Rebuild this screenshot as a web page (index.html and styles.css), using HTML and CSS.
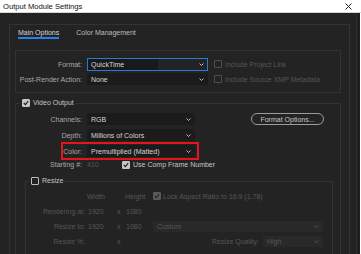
FILE: index.html
```html
<!DOCTYPE html>
<html lang="en">
<head>
    <meta charset="UTF-8">
    <title>Output Module Settings</title>
    <link rel="stylesheet" href="styles.css">
</head>
<body>

<div class="titlebar">
    <span class="title">Output Module Settings</span>
    <svg class="close" width="7" height="7" viewBox="0 0 7 7"><path d="M0.5 0.5 L6.5 6.5 M6.5 0.5 L0.5 6.5" stroke="#222" stroke-width="1" fill="none"/></svg>
</div>

<div class="window">
    <div class="main">
        <div class="panel">
            <!-- Tabs -->
            <div class="tabs">
                <span class="tab active">Main Options</span>
                <span class="tab">Color Management</span>
            </div>

            <!-- Format -->
            <div class="group format-group">
                <div class="row">
                    <span class="lbl">Format:</span>
                    <div class="select wide focused"><span class="val">QuickTime</span><svg class="chev" width="5" height="3" viewBox="0 0 5 3"><path d="M0.5 0.5 L2.5 2.5 L4.5 0.5" stroke="#bdbdbd" fill="none"/></svg></div>
                    <span class="check"></span><span class="dim">Include Project Link</span>
                </div>
                <div class="row">
                    <span class="lbl">Post-Render Action:</span>
                    <div class="select wide"><span class="val">None</span><svg class="chev" width="5" height="3" viewBox="0 0 5 3"><path d="M0.5 0.5 L2.5 2.5 L4.5 0.5" stroke="#bdbdbd" fill="none"/></svg></div>
                    <span class="check"></span><span class="dim">Include Source XMP Metadata</span>
                </div>
            </div>

            <!-- Video Output -->
            <fieldset class="group video">
                <legend><span class="check on"><svg width="6" height="6" viewBox="0 0 6 6"><path d="M0.8 3 L2.4 4.6 L5.2 1.2" stroke="#222" stroke-width="1.2" fill="none"/></svg></span>Video Output</legend>
                <div class="video-body">
                    <div class="fields">
                        <div class="row">
                            <span class="lbl">Channels:</span>
                            <div class="select"><span class="val">RGB</span><svg class="chev" width="5" height="3" viewBox="0 0 5 3"><path d="M0.5 0.5 L2.5 2.5 L4.5 0.5" stroke="#bdbdbd" fill="none"/></svg></div>
                        </div>
                        <div class="row">
                            <span class="lbl">Depth:</span>
                            <div class="select"><span class="val">Millions of Colors</span><svg class="chev" width="5" height="3" viewBox="0 0 5 3"><path d="M0.5 0.5 L2.5 2.5 L4.5 0.5" stroke="#bdbdbd" fill="none"/></svg></div>
                        </div>
                        <div class="row marked">
                            <span class="lbl">Color:</span>
                            <div class="select"><span class="val">Premultiplied (Matted)</span><svg class="chev" width="5" height="3" viewBox="0 0 5 3"><path d="M0.5 0.5 L2.5 2.5 L4.5 0.5" stroke="#bdbdbd" fill="none"/></svg></div>
                        </div>
                    </div>
                    <button class="pill">Format Options...</button>
                </div>

                <div class="row start-row">
                    <span class="lbl">Starting #:</span>
                    <span class="start-val">410</span>
                    <span class="check on"><svg width="6" height="6" viewBox="0 0 6 6"><path d="M0.8 3 L2.4 4.6 L5.2 1.2" stroke="#222" stroke-width="1.2" fill="none"/></svg></span><span>Use Comp Frame Number</span>
                </div>

                <!-- Resize -->
                <fieldset class="group resize">
                    <legend><span class="check light"></span>Resize</legend>
                    <div class="rz-head">
                        <span class="rz-w">Width</span>
                        <span class="rz-h">Height</span>
                        <span class="check on dimmed"><svg width="6" height="6" viewBox="0 0 6 6"><path d="M0.8 3 L2.4 4.6 L5.2 1.2" stroke="#2a2a2a" stroke-width="1.2" fill="none"/></svg></span><span>Lock Aspect Ratio to 16:9 (1.78)</span>
                    </div>
                    <div class="rz-row">
                        <span class="rz-lbl">Rendering at:</span>
                        <span class="rz-a">1920</span><span class="rz-x">x</span><span class="rz-b">1080</span>
                    </div>
                    <div class="rz-row">
                        <span class="rz-lbl">Resize to:</span>
                        <span class="rz-a">1920</span><span class="rz-x">x</span><span class="rz-b">1080</span>
                        <div class="select off grow"><span class="val">Custom</span><svg class="chev" width="5" height="3" viewBox="0 0 5 3"><path d="M0.5 0.5 L2.5 2.5 L4.5 0.5" stroke="#555" fill="none"/></svg></div>
                    </div>
                    <div class="rz-row">
                        <span class="rz-lbl">Resize %:</span>
                        <span class="rz-a"></span><span class="rz-x">x</span><span class="rz-b"></span>
                        <span class="rz-q">Resize Quality:</span>
                        <div class="select off small"><span class="val">High</span><svg class="chev" width="5" height="3" viewBox="0 0 5 3"><path d="M0.5 0.5 L2.5 2.5 L4.5 0.5" stroke="#555" fill="none"/></svg></div>
                    </div>
                </fieldset>
            </fieldset>
        </div>
    </div>
    <div class="side"></div>
</div>

</body>
</html>
```

FILE: styles.css
```css
/* Global */
* {
    box-sizing: border-box;
}

body {
    margin: 0;
    width: 361px;
    height: 254px;
    overflow: hidden;
    background-color: #ffffff;
    font-family: "Liberation Sans", Arial, sans-serif;
    font-size: 7px;
    color: #b9b9b9;
}

/* Title bar */
.titlebar {
    height: 13px;
    background-color: #ffffff;
    border-bottom: 1px solid #d6d6d6;
    display: flex;
    align-items: center;
    justify-content: space-between;
    padding: 0 9px 0 3px;
    color: #111;
    font-size: 7.6px;
}

.window {
    display: flex;
    width: 360px;
    height: 241px;
    background-color: #232323;
}

.main {
    flex: 1;
    padding: 11px 0 0 9px;
}

.side {
    width: 4px;
    border-left: 1px solid #2e2e2e;
    background-color: #1f1f1f;
}

.panel {
    width: 341px;
    height: 260px;
    border: 1px solid #323232;
    padding: 3px 0 0 8px;
}

/* Tabs */
.tabs {
    display: flex;
    gap: 17px;
    line-height: 9px;
}

.tab {
    color: #bdbdbd;
    border-bottom: 2px solid transparent;
}

.tab.active {
    color: #d6d6d6;
    border-bottom-color: #2680eb;
}

/* Groups */
.group {
    border: 1px solid #323232;
    margin: 0;
    min-width: 0;
}

.format-group {
    width: 326px;
    margin: 11px 0 0 -3px;
    padding: 7px 0 7px 0;
    display: flex;
    flex-direction: column;
    gap: 3px;
}

.row {
    display: flex;
    align-items: center;
    height: 12px;
}

.lbl {
    width: 66px;
    margin-right: 5px;
    text-align: right;
    color: #a9a9a9;
}

.select {
    height: 12px;
    width: 108px;
    background-color: #1b1b1b;
    border: 1px solid #1b1b1b;
    display: flex;
    align-items: center;
    justify-content: space-between;
    padding: 0 3px 0 3px;
    color: #d4d4d4;
}

.select.wide {
    width: 121px;
}

.select.focused {
    height: 13px;
    border-color: #2a79d8;
    background: linear-gradient(to right, #191919 0, #191919 70px, #232323 70px);
}

.chev {
    display: block;
}

.check {
    display: inline-flex;
    align-items: center;
    justify-content: center;
    width: 8px;
    height: 8px;
    border: 1px solid #4e4e4e;
    border-radius: 1px;
    margin: 0 3px 0 6px;
    flex: none;
}

.check.on {
    background-color: #c6c6c6;
    border-color: #c6c6c6;
}

.check.light {
    border-color: #bdbdbd;
}

.check.dimmed {
    background-color: #5a5a5a;
    border-color: #5a5a5a;
}

.check svg {
    display: block;
}

.dim {
    color: #565656;
}

/* Video output */
.video {
    width: 326px;
    margin: 6px 0 0 -3px;
    padding: 0 0 20px 0;
}

legend {
    display: flex;
    align-items: center;
    height: 8px;
    line-height: 8px;
    padding: 0 2px;
    margin-left: 4px;
    color: #c6c6c6;
}

legend .check {
    margin: 0 3px 0 0;
}

.video-body {
    display: flex;
    align-items: flex-start;
    padding-top: 6px;
}

.fields {
    display: flex;
    flex-direction: column;
    gap: 4px;
}

.marked {
    position: relative;
}

/* red annotation box */
.marked::after {
    content: "";
    position: absolute;
    left: 45px;
    right: -4px;
    top: -3px;
    bottom: -3px;
    border: 2px solid #e3161d;
}

.pill {
    margin: 0 16px 0 auto;
    width: 73px;
    height: 12px;
    padding: 0;
    border: 1px solid #9c9c9c;
    border-radius: 6px;
    background: transparent;
    color: #c8c8c8;
    font-family: inherit;
    font-size: 7px;
}

.start-row {
    margin-top: 3px;
    height: 9px;
    color: #c6c6c6;
}

.start-val {
    width: 29px;
    color: #555;
}

/* Resize */
.resize {
    margin: 8px 7px 0 9px;
    padding: 0 9px 20px 0;
    color: #575757;
}

.resize legend {
    margin-left: 3px;
}

.rz-head {
    display: flex;
    align-items: center;
    height: 8px;
    margin-top: 7px;
    padding-left: 61px;
}

.rz-w {
    width: 38px;
}

.rz-h {
    width: 28px;
}

.rz-head .check {
    margin: 0 2px 0 0;
}

.rz-row {
    display: flex;
    align-items: center;
    height: 11px;
    margin-top: 4px;
}

.rz-head + .rz-row {
    margin-top: 6px;
}

.rz-lbl {
    width: 59px;
    margin-right: 3px;
    text-align: right;
}

.rz-a {
    width: 26px;
}

.rz-x {
    width: 12px;
    padding-left: 3px;
}

.rz-b {
    width: 27px;
}

.rz-q {
    flex: 1;
    text-align: right;
    margin-right: 4px;
}

.select.off {
    height: 11px;
    background-color: #292929;
    border-color: #292929;
    color: #575757;
}

.select.grow {
    flex: 1;
}

.select.small {
    width: 60px;
}
```
